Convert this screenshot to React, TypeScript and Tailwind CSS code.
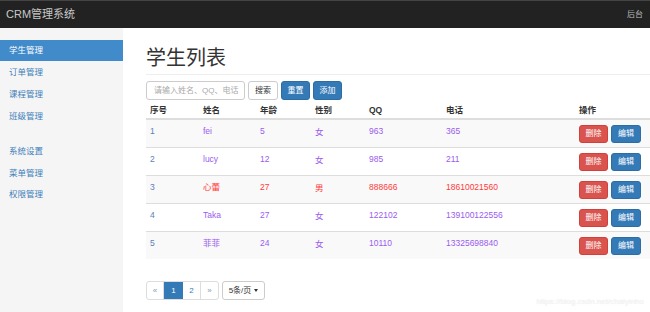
import { FC } from "react";

type Student = { id: number; name: string; age: number; sex: string; qq: string; phone: string; hot?: boolean };

const students: Student[] = [
  { id: 1, name: "fei", age: 5, sex: "女", qq: "963", phone: "365" },
  { id: 2, name: "lucy", age: 12, sex: "女", qq: "985", phone: "211" },
  { id: 3, name: "心蕾", age: 27, sex: "男", qq: "888666", phone: "18610021560", hot: true },
  { id: 4, name: "Taka", age: 27, sex: "女", qq: "122102", phone: "139100122556" },
  { id: 5, name: "菲菲", age: 24, sex: "女", qq: "10110", phone: "13325698840" },
];

const menuTop = ["学生管理", "订单管理", "课程管理", "班级管理"];
const menuBottom = ["系统设置", "菜单管理", "权限管理"];

const App: FC = () => {
  return (
    <div
      className="w-[650px] h-[312px] overflow-hidden bg-white flex flex-col"
      style={{ fontFamily: '"Liberation Sans", "Noto Sans CJK SC", sans-serif' }}
    >
      {/* top bar */}
      <header className="h-[28px] shrink-0 bg-[#222] border-t border-[#444] flex items-center justify-between px-[6px]">
        <span className="text-[11px] text-[#c8c8c8]">CRM管理系统</span>
        <span className="text-[8px] text-[#bdbdbd] pr-[1px]">后台</span>
      </header>

      <div className="flex flex-1 min-h-0">
        {/* sidebar */}
        <aside className="w-[123px] shrink-0 bg-[#f5f5f5] pt-[12px]">
          <ul className="text-[8.5px] text-[#3f7fb9]">
            {menuTop.map((m, i) => (
              <li
                key={m}
                className={
                  i === 0
                    ? "h-[21px] flex items-center pl-[9px] bg-[#428bca] text-white"
                    : "h-[22px] flex items-center pl-[9px]"
                }
              >
                {m}
              </li>
            ))}
          </ul>
          <ul className="text-[8.5px] text-[#3f7fb9] mt-[14px]">
            {menuBottom.map((m) => (
              <li key={m} className="h-[21.5px] flex items-center pl-[9px]">
                {m}
              </li>
            ))}
          </ul>
        </aside>

        {/* main */}
        <main className="flex-1 min-w-0 pl-[23px] overflow-hidden">
          <h1 className="text-[20px] leading-none text-[#333] mt-[20px] pb-[6px] border-b border-[#eee]">学生列表</h1>

          <div className="flex items-center gap-[3px] mt-[6px] text-[8px]">
            <div className="w-[99px] h-[19px] border border-[#ccc] rounded-[3px] flex items-center pl-[7px] text-[#aaa]">
              请输入姓名、QQ、电话
            </div>
            <button className="w-[30px] h-[19px] border border-[#ccc] rounded-[3px] bg-white text-[#333]">搜索</button>
            <button className="w-[29px] h-[19px] rounded-[3px] bg-[#337ab7] border border-[#2e6da4] text-white">重置</button>
            <button className="w-[29px] h-[19px] rounded-[3px] bg-[#337ab7] border border-[#2e6da4] text-white">添加</button>
          </div>

          <table className="table-fixed w-[520px] mt-[2px] text-[8.5px] border-collapse">
            <colgroup>
              <col className="w-[53px]" />
              <col className="w-[57px]" />
              <col className="w-[55px]" />
              <col className="w-[54px]" />
              <col className="w-[77px]" />
              <col className="w-[133px]" />
              <col />
            </colgroup>
            <thead>
              <tr className="h-[17px] border-b-2 border-[#ddd] text-[#333] text-left">
                <th className="px-[4px] font-bold">序号</th>
                <th className="px-[4px] font-bold">姓名</th>
                <th className="px-[4px] font-bold">年龄</th>
                <th className="px-[4px] font-bold">性别</th>
                <th className="px-[4px] font-bold">QQ</th>
                <th className="px-[4px] font-bold">电话</th>
                <th className="px-[4px] font-bold">操作</th>
              </tr>
            </thead>
            <tbody>
              {students.map((s, i) => {
                const tone = s.hot ? "text-[#ff3b3b]" : "text-[#9a5cf0]";
                return (
                  <tr key={s.id} className={(i % 2 === 0 ? "bg-[#f9f9f9]" : "bg-white") + " border-t border-[#ddd] align-top"}>
                    <td className="px-[4px] pt-[5px] h-[28px] text-[#5b7fb8]">{s.id}</td>
                    <td className={"px-[4px] pt-[5px] " + tone}>{s.name}</td>
                    <td className={"px-[4px] pt-[5px] " + tone}>{s.age}</td>
                    <td className={"px-[4px] pt-[6px] " + tone}>{s.sex}</td>
                    <td className={"px-[4px] pt-[5px] " + tone}>{s.qq}</td>
                    <td className={"px-[4px] pt-[5px] " + tone}>{s.phone}</td>
                    <td className="px-[4px] pt-[5px]">
                      <div className="flex gap-[3px] text-[8px] text-white">
                        <button className="w-[29px] h-[18px] rounded-[3px] bg-[#d9534f] border border-[#d43f3a]">删除</button>
                        <button className="w-[30px] h-[18px] rounded-[3px] bg-[#337ab7] border border-[#2e6da4]">编辑</button>
                      </div>
                    </td>
                  </tr>
                );
              })}
            </tbody>
          </table>

          <div className="flex items-center mt-[22px] text-[8px]">
            <div className="flex h-[19px] border border-[#ddd] rounded-[3px] overflow-hidden">
              <span className="w-[17px] flex items-center justify-center text-[#8a9ab0] border-r border-[#ddd]">«</span>
              <span className="w-[19px] flex items-center justify-center bg-[#337ab7] text-white">1</span>
              <span className="w-[18px] flex items-center justify-center text-[#337ab7] border-r border-[#ddd]">2</span>
              <span className="w-[17px] flex items-center justify-center text-[#8a9ab0]">»</span>
            </div>
            <div className="ml-[3px] w-[43px] h-[19px] border border-[#ccc] rounded-[3px] flex items-center justify-center gap-[3px] text-[#333]">
              5条/页
              <span className="border-t-[3px] border-t-[#333] border-x-[2.5px] border-x-transparent" />
            </div>
          </div>

          <div className="flex justify-end pr-[6px] mt-[-4px]">
            <span className="text-[8px] text-[#f7f7f7] [text-shadow:0_0_1px_#e2e2e2]">https://blog.csdn.net/chaiyinho</span>
          </div>
        </main>
      </div>
    </div>
  );
};

export default App;
